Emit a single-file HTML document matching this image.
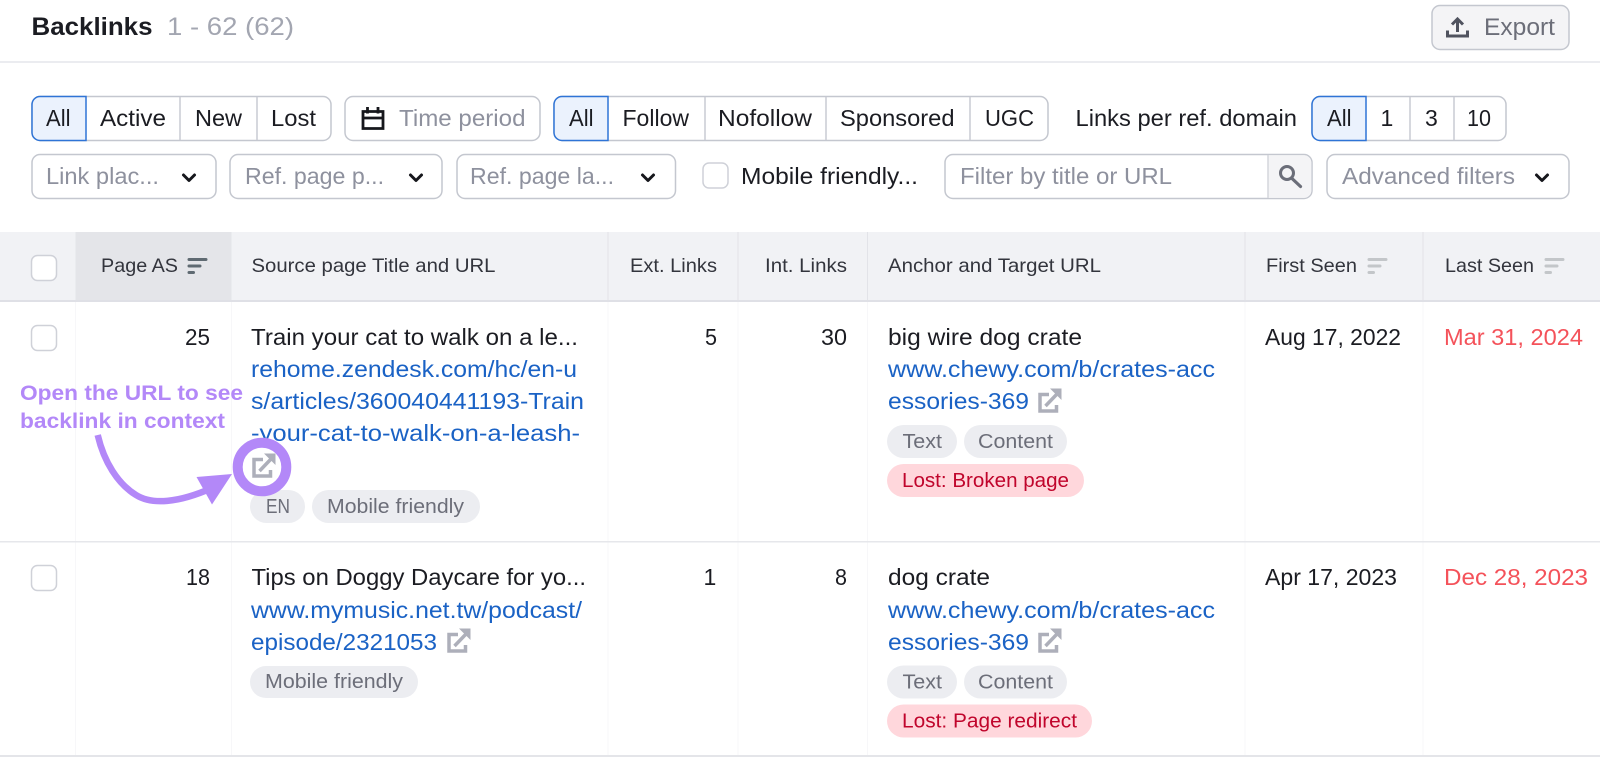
<!DOCTYPE html>
<html><head><meta charset="utf-8"><style>
html,body{margin:0;padding:0;background:#fff;width:1600px;height:759px;overflow:hidden}
svg{display:block}
text{font-family:"Liberation Sans",sans-serif;font-size:23px;fill:#1b1c22;white-space:pre}
.g{fill:#8e919e}.l{fill:#1a62c5}.h{font-size:19.500px;fill:#33353d}.t{font-size:20px;fill:#6c6e79}.r{font-size:20px;fill:#c0052c}.d{fill:#f4525a}
.b{fill:#fff;stroke:#c4c7cf;stroke-width:1.500}.a{fill:#ebf2fd;stroke:#2f74d6;stroke-width:1.500}.s{stroke:#c9cbd3;stroke-width:1.500}
.c{fill:none;stroke:#16171c;stroke-width:3;stroke-linecap:round;stroke-linejoin:round}
.p{fill:#ecedf1}.q{fill:#ffd7dc}.f{fill:#fff;stroke:#cfd1d8;stroke-width:1.500}
.x{fill:none;stroke:#adafba;stroke-width:3.500}.y{stroke:#adafba;stroke-width:3.500}.z{fill:#adafba}
.v{stroke:#f7f7f9;stroke-width:1}.w{stroke:#e2e3e8;stroke-width:1}
.o{stroke-width:3;stroke-linecap:round}
</style></head><body>
<svg width="1600" height="759" viewBox="0 0 1600 759" xmlns="http://www.w3.org/2000/svg">
<defs>
<g id="ext"><path class="x" d="M11 6.500H2V23H18.500V17"/><path class="y" d="M7.500 18L19 6"/><path class="z" d="M12 0.500H23.500V12z"/></g>
</defs>
<rect width="1600" height="759" fill="#fff"/>
<text x="31.500" y="35" style="font-size:25px;font-weight:700" textLength="121" lengthAdjust="spacingAndGlyphs">Backlinks</text>
<text x="167" y="35" style="font-size:25px;fill:#a3a6b1" textLength="127" lengthAdjust="spacingAndGlyphs">1 - 62 (62)</text>
<rect x="1432" y="5.500" width="137" height="44" rx="8" fill="#f4f4f6" stroke="#c4c7cf" stroke-width="1.500"/>
<path d="M1447.500 30.500v5.500h20v-5.500" fill="none" stroke="#50535f" stroke-width="3"/>
<path d="M1457.500 32V19M1452 24.500l5.500-5.500 5.500 5.500" fill="none" stroke="#50535f" stroke-width="3"/>
<text x="1484" y="35" style="font-size:24px;fill:#6c6e79" textLength="71" lengthAdjust="spacingAndGlyphs">Export</text>
<rect y="61" width="1600" height="2" fill="#ebecf0"/>

<!-- filter row 1 -->
<rect class="b" x="32" y="96.500" width="299" height="44" rx="8"/>
<path class="a" d="M86 96.500H40a8 8 0 0 0-8 8v28a8 8 0 0 0 8 8h46z"/>
<path class="s" d="M180 97v43M257 97v43"/>
<text x="46" y="126" textLength="24.500" lengthAdjust="spacingAndGlyphs">All</text>
<text x="100" y="126" textLength="66" lengthAdjust="spacingAndGlyphs">Active</text>
<text x="195" y="126" textLength="47" lengthAdjust="spacingAndGlyphs">New</text>
<text x="271" y="126" textLength="45" lengthAdjust="spacingAndGlyphs">Lost</text>
<rect class="b" x="345" y="96.500" width="195" height="44" rx="8"/>
<path d="M363 111.500h20v17h-20zM363 118h20M367.500 107v6.500M378 107v6.500" fill="none" stroke="#16171c" stroke-width="2.800"/>
<text class="g" x="399" y="126" textLength="126.500" lengthAdjust="spacingAndGlyphs">Time period</text>
<rect class="b" x="554" y="96.500" width="494" height="44" rx="8"/>
<path class="a" d="M608 96.500H562a8 8 0 0 0-8 8v28a8 8 0 0 0 8 8h46z"/>
<path class="s" d="M705 97v43M826 97v43M970 97v43"/>
<text x="569" y="126" textLength="24.500" lengthAdjust="spacingAndGlyphs">All</text>
<text x="622.500" y="126" textLength="66.500" lengthAdjust="spacingAndGlyphs">Follow</text>
<text x="718" y="126" textLength="94" lengthAdjust="spacingAndGlyphs">Nofollow</text>
<text x="840" y="126" textLength="114.500" lengthAdjust="spacingAndGlyphs">Sponsored</text>
<text x="985" y="126" textLength="49" lengthAdjust="spacingAndGlyphs">UGC</text>
<text x="1075.500" y="126" textLength="221.500" lengthAdjust="spacingAndGlyphs">Links per ref. domain</text>
<rect class="b" x="1312" y="96.500" width="194" height="44" rx="8"/>
<path class="a" d="M1366 96.500h-46a8 8 0 0 0-8 8v28a8 8 0 0 0 8 8h46z"/>
<path class="s" d="M1410 97v43M1454 97v43"/>
<text x="1327" y="126" textLength="24.500" lengthAdjust="spacingAndGlyphs">All</text>
<text x="1380.500" y="126">1</text>
<text x="1425" y="126">3</text>
<text x="1467" y="126" textLength="24" lengthAdjust="spacingAndGlyphs">10</text>

<!-- filter row 2 -->
<rect class="b" x="32" y="154.500" width="184" height="44" rx="8"/>
<text class="g" x="46" y="184" textLength="113" lengthAdjust="spacingAndGlyphs">Link plac...</text>
<path class="c" d="M183.500 175l5.500 5.500 5.500-5.500"/>
<rect class="b" x="230" y="154.500" width="212" height="44" rx="8"/>
<text class="g" x="245" y="184" textLength="139" lengthAdjust="spacingAndGlyphs">Ref. page p...</text>
<path class="c" d="M410.500 175l5.500 5.500 5.500-5.500"/>
<rect class="b" x="457" y="154.500" width="218.500" height="44" rx="8"/>
<text class="g" x="470" y="184" textLength="144" lengthAdjust="spacingAndGlyphs">Ref. page la...</text>
<path class="c" d="M642.500 175l5.500 5.500 5.500-5.500"/>
<rect class="f" x="703" y="163" width="25" height="25" rx="6"/>
<text x="741" y="184" textLength="177" lengthAdjust="spacingAndGlyphs">Mobile friendly...</text>
<rect class="b" x="945" y="154.500" width="367" height="44" rx="8"/>
<path d="M1268 155.300h36a7.300 7.300 0 0 1 7.300 7.300v28a7.300 7.300 0 0 1-7.300 7.300h-36z" fill="#f4f4f6"/>
<path d="M1268 155v43" stroke="#d4d6dc" stroke-width="1.500"/>
<circle cx="1287" cy="173" r="6.500" fill="none" stroke="#6b6e79" stroke-width="3"/>
<path d="M1292 178.500l8.500 8" stroke="#6b6e79" stroke-width="3.200" stroke-linecap="round"/>
<text class="g" x="960" y="184" textLength="212" lengthAdjust="spacingAndGlyphs">Filter by title or URL</text>
<rect class="b" x="1327" y="154.500" width="242" height="44" rx="8"/>
<text class="g" x="1342" y="184" textLength="173" lengthAdjust="spacingAndGlyphs">Advanced filters</text>
<path class="c" d="M1536.500 175l5.500 5.500 5.500-5.500"/>

<!-- table header -->
<rect y="232" width="1600" height="69" fill="#f1f2f5"/>
<rect x="75.500" y="232" width="156" height="69" fill="#e4e5e9"/>
<rect y="300" width="1600" height="2" fill="#dfe0e6"/>
<path class="w" d="M608 232v68M738 232v68M867.500 232v68M1245 232v68M1423 232v68"/>
<rect class="f" x="31.500" y="255.500" width="25" height="25" rx="6"/>
<text class="h" x="101" y="272" textLength="77" lengthAdjust="spacingAndGlyphs">Page AS</text>
<path class="o" d="M189 259.500h17M189 266h11M189 272.500h4.500" stroke="#5f6a72"/>
<text class="h" x="251.500" y="272" textLength="244" lengthAdjust="spacingAndGlyphs">Source page Title and URL</text>
<text class="h" x="630" y="272" textLength="87" lengthAdjust="spacingAndGlyphs">Ext. Links</text>
<text class="h" x="765" y="272" textLength="82" lengthAdjust="spacingAndGlyphs">Int. Links</text>
<text class="h" x="888" y="272" textLength="213" lengthAdjust="spacingAndGlyphs">Anchor and Target URL</text>
<text class="h" x="1266" y="272" textLength="91" lengthAdjust="spacingAndGlyphs">First Seen</text>
<path class="o" d="M1369 259.500h17M1369 266h11M1369 272.500h4.500" stroke="#c3c6c9"/>
<text class="h" x="1445" y="272" textLength="89" lengthAdjust="spacingAndGlyphs">Last Seen</text>
<path class="o" d="M1546 259.500h17M1546 266h11M1546 272.500h4.500" stroke="#c3c6c9"/>

<!-- column faint lines -->
<path class="v" d="M75.500 302v453M231.500 302v453M608 302v453M738 302v453M867.500 302v453M1245 302v453M1423 302v453"/>

<!-- row 1 -->
<rect class="f" x="31.500" y="325.500" width="25" height="25" rx="6"/>
<text x="185" y="345" textLength="25" lengthAdjust="spacingAndGlyphs">25</text>
<text x="251" y="345" textLength="327" lengthAdjust="spacingAndGlyphs">Train your cat to walk on a le...</text>
<text class="l" x="251" y="377" textLength="326" lengthAdjust="spacingAndGlyphs">rehome.zendesk.com/hc/en-u</text>
<text class="l" x="251" y="409" textLength="333" lengthAdjust="spacingAndGlyphs">s/articles/360040441193-Train</text>
<text class="l" x="251" y="441" textLength="329" lengthAdjust="spacingAndGlyphs">-your-cat-to-walk-on-a-leash-</text>
<use href="#ext" x="252" y="453"/>
<rect class="p" x="250" y="490" width="55" height="33" rx="16.500"/>
<text class="t" x="266" y="513" textLength="24" lengthAdjust="spacingAndGlyphs">EN</text>
<rect class="p" x="312" y="490" width="168" height="33" rx="16.500"/>
<text class="t" x="327" y="513" textLength="137" lengthAdjust="spacingAndGlyphs">Mobile friendly</text>
<text x="705" y="345" textLength="12" lengthAdjust="spacingAndGlyphs">5</text>
<text x="821" y="345" textLength="26" lengthAdjust="spacingAndGlyphs">30</text>
<text x="888" y="345" textLength="194" lengthAdjust="spacingAndGlyphs">big wire dog crate</text>
<text class="l" x="888" y="377" textLength="327" lengthAdjust="spacingAndGlyphs">www.chewy.com/b/crates-acc</text>
<text class="l" x="888" y="409" textLength="141" lengthAdjust="spacingAndGlyphs">essories-369</text>
<use href="#ext" x="1038" y="388"/>
<rect class="p" x="887" y="425" width="70" height="33" rx="16.500"/>
<text class="t" x="902.500" y="448" textLength="39.500" lengthAdjust="spacingAndGlyphs">Text</text>
<rect class="p" x="964" y="425" width="103" height="33" rx="16.500"/>
<text class="t" x="978" y="448" textLength="75" lengthAdjust="spacingAndGlyphs">Content</text>
<rect class="q" x="887" y="464" width="197" height="33" rx="16.500"/>
<text class="r" x="902" y="487" textLength="167" lengthAdjust="spacingAndGlyphs">Lost: Broken page</text>
<text x="1265" y="345" textLength="136" lengthAdjust="spacingAndGlyphs">Aug 17, 2022</text>
<text class="d" x="1444" y="345" textLength="139" lengthAdjust="spacingAndGlyphs">Mar 31, 2024</text>
<rect y="541" width="1600" height="1.500" fill="#e6e7eb"/>

<!-- row 2 -->
<rect class="f" x="31.500" y="565.500" width="25" height="25" rx="6"/>
<text x="186" y="585" textLength="24" lengthAdjust="spacingAndGlyphs">18</text>
<text x="251.500" y="585" textLength="334.500" lengthAdjust="spacingAndGlyphs">Tips on Doggy Daycare for yo...</text>
<text class="l" x="251" y="618" textLength="331" lengthAdjust="spacingAndGlyphs">www.mymusic.net.tw/podcast/</text>
<text class="l" x="251" y="650" textLength="186" lengthAdjust="spacingAndGlyphs">episode/2321053</text>
<use href="#ext" x="447" y="628"/>
<rect class="p" x="250" y="666" width="168" height="32" rx="16"/>
<text class="t" x="265" y="688" textLength="138" lengthAdjust="spacingAndGlyphs">Mobile friendly</text>
<text x="703.500" y="585">1</text>
<text x="835" y="585" textLength="12" lengthAdjust="spacingAndGlyphs">8</text>
<text x="888" y="585" textLength="102" lengthAdjust="spacingAndGlyphs">dog crate</text>
<text class="l" x="888" y="618" textLength="327" lengthAdjust="spacingAndGlyphs">www.chewy.com/b/crates-acc</text>
<text class="l" x="888" y="650" textLength="141" lengthAdjust="spacingAndGlyphs">essories-369</text>
<use href="#ext" x="1038" y="628"/>
<rect class="p" x="887" y="665.500" width="70" height="33" rx="16.500"/>
<text class="t" x="902.500" y="688.500" textLength="39.500" lengthAdjust="spacingAndGlyphs">Text</text>
<rect class="p" x="964" y="665.500" width="103" height="33" rx="16.500"/>
<text class="t" x="978" y="688.500" textLength="75" lengthAdjust="spacingAndGlyphs">Content</text>
<rect class="q" x="887" y="704.500" width="205" height="33" rx="16.500"/>
<text class="r" x="902" y="727.500" textLength="175" lengthAdjust="spacingAndGlyphs">Lost: Page redirect</text>
<text x="1265" y="585" textLength="132" lengthAdjust="spacingAndGlyphs">Apr 17, 2023</text>
<text class="d" x="1444" y="585" textLength="144" lengthAdjust="spacingAndGlyphs">Dec 28, 2023</text>
<rect y="755" width="1600" height="2" fill="#e4e5e9"/>

<!-- annotation -->
<circle cx="262" cy="467" r="24.300" fill="none" stroke="#b388f8" stroke-width="10"/>
<text x="20" y="400" style="font-size:21.500px;font-weight:700;fill:#b388f8" textLength="223" lengthAdjust="spacingAndGlyphs">Open the URL to see</text>
<text x="20" y="428" style="font-size:21.500px;font-weight:700;fill:#b388f8" textLength="205" lengthAdjust="spacingAndGlyphs">backlink in context</text>
<path d="M97.700 435C104 462 118 484 136 495C152 505 178 503 212 488" fill="none" stroke="#b388f8" stroke-width="6.500"/>
<path d="M196.500 477L232 474L212 504.500z" fill="#b388f8"/>
</svg>
</body></html>
